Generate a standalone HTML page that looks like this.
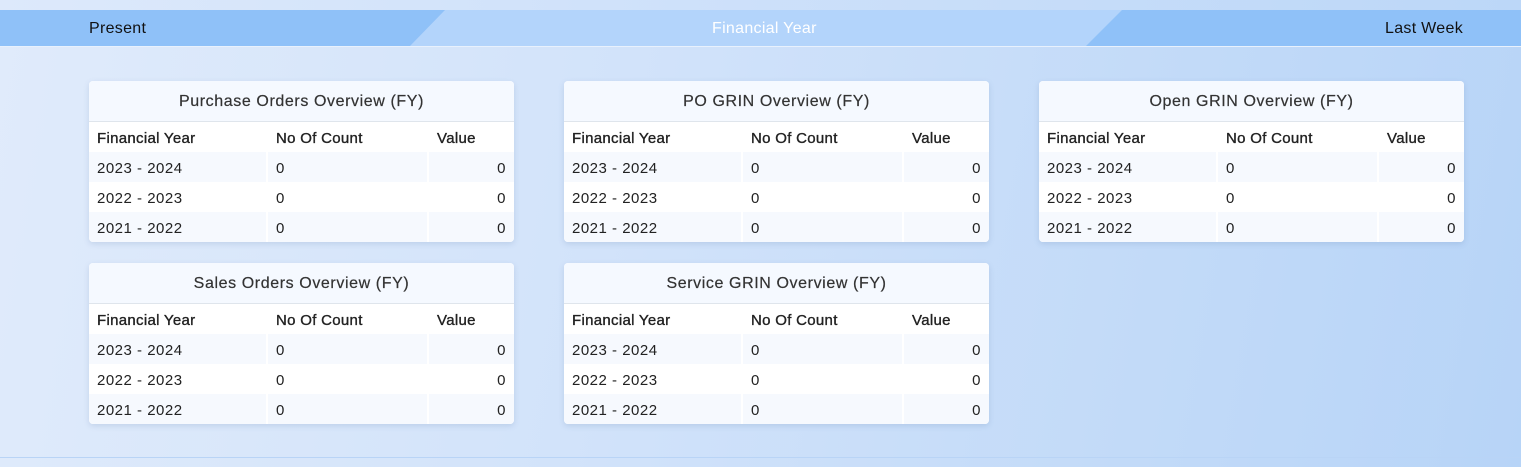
<!DOCTYPE html>
<html><head><meta charset="utf-8"><style>
*{box-sizing:border-box;margin:0;padding:0}
body{width:1521px;height:467px;overflow:hidden;font-family:"Liberation Sans",sans-serif;background:linear-gradient(100deg,#e0ebfb 0%,#d2e3fa 40%,#b7d4f7 100%);position:relative}
.top{position:absolute;left:0;top:0;width:1521px;height:10px;background:linear-gradient(90deg,#dde9fb,#bcd7f8)}
.bar{position:absolute;left:0;top:10px;width:1521px;height:36px;background:#b3d4fb}
.line{position:absolute;left:0;top:46px;width:1521px;height:1px;background:#e8f1fd}
.tl{position:absolute;left:0;top:10px;width:445px;height:36px;background:#8fc1f8;clip-path:polygon(0 0,100% 0,410px 100%,0 100%)}
.tr{position:absolute;left:1086px;top:10px;width:435px;height:36px;background:#8fc1f8;clip-path:polygon(36px 0,100% 0,100% 100%,0 100%)}
.lbl{position:absolute;top:10px;height:36px;line-height:37px;font-size:16px;letter-spacing:.3px;color:#111}
.bot{position:absolute;left:0;top:457px;width:1521px;height:1px;background:#b9d4f6}
.card{position:absolute;width:425px;height:161px;background:#fff;border-radius:4px;box-shadow:0 2px 6px rgba(80,110,160,.18);overflow:hidden}
.card h3{height:41px;line-height:41px;text-align:center;font-size:16px;letter-spacing:.6px;font-weight:normal;color:#333;background:#f5f9ff;border-bottom:1px solid #dfe5ec;-webkit-text-stroke:.2px #333}
.r{display:flex;height:30px;line-height:33px;font-size:15px;letter-spacing:.5px;color:#222}
.r div{padding-left:8px}
.r .a{width:177px}.r .b{width:161px;border-left:2px solid #fff}.r .c{flex:1;text-align:right;padding-right:8px;border-left:2px solid #fff}
.h{color:#222;letter-spacing:.3px;-webkit-text-stroke:.35px #222}
.h .b,.h .c{border-left-color:transparent}.h .c{text-align:left}
.o{background:#f6f9fe}
</style></head><body>
<div class="top"></div>
<div class="bar"></div>
<div class="tl"></div><div class="tr"></div>
<div class="line"></div>
<div class="lbl" style="left:89px">Present</div>
<div class="lbl" style="left:712px;color:#fff">Financial Year</div>
<div class="lbl" style="right:58px">Last Week</div>

<div class="card" style="left:89px;top:81px"><h3>Purchase Orders Overview (FY)</h3>
<div class="r h"><div class="a">Financial Year</div><div class="b">No Of Count</div><div class="c">Value</div></div>
<div class="r o"><div class="a">2023 - 2024</div><div class="b">0</div><div class="c">0</div></div>
<div class="r"><div class="a">2022 - 2023</div><div class="b">0</div><div class="c">0</div></div>
<div class="r o"><div class="a">2021 - 2022</div><div class="b">0</div><div class="c">0</div></div></div>

<div class="card" style="left:564px;top:81px"><h3>PO GRIN Overview (FY)</h3>
<div class="r h"><div class="a">Financial Year</div><div class="b">No Of Count</div><div class="c">Value</div></div>
<div class="r o"><div class="a">2023 - 2024</div><div class="b">0</div><div class="c">0</div></div>
<div class="r"><div class="a">2022 - 2023</div><div class="b">0</div><div class="c">0</div></div>
<div class="r o"><div class="a">2021 - 2022</div><div class="b">0</div><div class="c">0</div></div></div>

<div class="card" style="left:1039px;top:81px"><h3>Open GRIN Overview (FY)</h3>
<div class="r h"><div class="a">Financial Year</div><div class="b">No Of Count</div><div class="c">Value</div></div>
<div class="r o"><div class="a">2023 - 2024</div><div class="b">0</div><div class="c">0</div></div>
<div class="r"><div class="a">2022 - 2023</div><div class="b">0</div><div class="c">0</div></div>
<div class="r o"><div class="a">2021 - 2022</div><div class="b">0</div><div class="c">0</div></div></div>

<div class="card" style="left:89px;top:263px"><h3>Sales Orders Overview (FY)</h3>
<div class="r h"><div class="a">Financial Year</div><div class="b">No Of Count</div><div class="c">Value</div></div>
<div class="r o"><div class="a">2023 - 2024</div><div class="b">0</div><div class="c">0</div></div>
<div class="r"><div class="a">2022 - 2023</div><div class="b">0</div><div class="c">0</div></div>
<div class="r o"><div class="a">2021 - 2022</div><div class="b">0</div><div class="c">0</div></div></div>

<div class="card" style="left:564px;top:263px"><h3>Service GRIN Overview (FY)</h3>
<div class="r h"><div class="a">Financial Year</div><div class="b">No Of Count</div><div class="c">Value</div></div>
<div class="r o"><div class="a">2023 - 2024</div><div class="b">0</div><div class="c">0</div></div>
<div class="r"><div class="a">2022 - 2023</div><div class="b">0</div><div class="c">0</div></div>
<div class="r o"><div class="a">2021 - 2022</div><div class="b">0</div><div class="c">0</div></div></div>

<div class="bot"></div>
</body></html>
